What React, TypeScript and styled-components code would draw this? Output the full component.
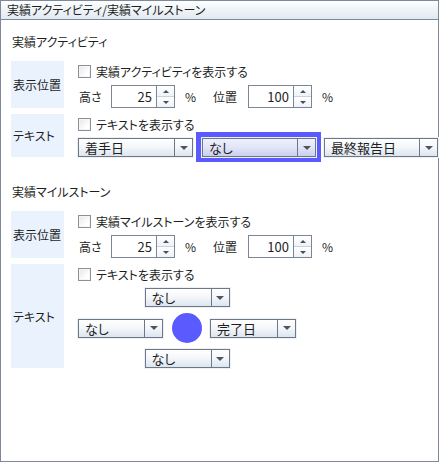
import React from 'react';
import styled, { createGlobalStyle, css } from 'styled-components';

const GlobalStyle = createGlobalStyle`
  html, body {
    margin: 0;
    padding: 0;
    background: #ffffff;
  }
  body {
    font-family: "Noto Sans CJK JP", "Noto Sans", sans-serif;
    font-size: 12px;
    color: #1e1e1e;
    font-feature-settings: "palt";
  }
`;

const borderColor = '#7e8898';
const comboBorder = '#6d7787';
const accent = '#5a5aff';

const Window = styled.div`
  box-sizing: border-box;
  width: 439px;
  height: 462px;
  border: 1px solid ${borderColor};
  display: flex;
  flex-direction: column;
  background: #ffffff;
`;

const TitleBar = styled.div`
  height: 18px;
  line-height: 18px;
  padding-left: 6px;
  border-bottom: 1px solid ${borderColor};
  background: linear-gradient(#fdfeff, #e1e9f1);
  white-space: nowrap;
`;

const Content = styled.div`
  padding: 12px 0 0 10px;
  display: flex;
  flex-direction: column;
`;

const Heading = styled.div<{ $gapTop?: number }>`
  height: 19px;
  line-height: 19px;
  padding-left: 1px;
  margin-top: ${({ $gapTop }) => $gapTop ?? 0}px;
  margin-bottom: 10px;
`;

const Row = styled.div`
  display: flex;
  gap: 14px;
  margin-bottom: 6px;
`;

const LabelCell = styled.div`
  box-sizing: border-box;
  width: 53px;
  flex: none;
  padding-left: 2px;
  display: flex;
  align-items: center;
  background: #eaf2fd;
`;

const Controls = styled.div`
  display: flex;
  flex-direction: column;
  gap: 4px;
`;

const CheckRow = styled.label`
  height: 20px;
  display: flex;
  align-items: center;
  gap: 5px;
  white-space: nowrap;
`;

const CheckBox = styled.span`
  box-sizing: border-box;
  width: 13px;
  height: 13px;
  border: 1px solid #8e9094;
  background: linear-gradient(135deg, #e4e6ea, #ffffff 70%);
  box-shadow: inset 0 0 0 1px #f4f5f7;
`;

const SpinRow = styled.div`
  height: 23px;
  display: flex;
  align-items: center;
  white-space: nowrap;
`;

const Caption = styled.span<{ $width: number; $indent?: number }>`
  width: ${({ $width }) => $width}px;
  margin-left: ${({ $indent }) => $indent ?? 0}px;
  flex: none;
`;

const Spinner = styled.div`
  box-sizing: border-box;
  width: 64px;
  height: 23px;
  border: 1px solid #7b8595;
  display: flex;
  flex: none;
  background: #ffffff;
`;

const SpinValue = styled.div`
  flex: 1;
  text-align: right;
  padding-right: 4px;
  line-height: 22px;
  font-size: 13px;
`;

const SpinButtons = styled.div`
  width: 17px;
  border-left: 1px solid #7b8595;
  display: flex;
  flex-direction: column;
`;

const SpinHalf = styled.div<{ $up?: boolean }>`
  flex: 1;
  display: flex;
  align-items: center;
  justify-content: center;
  background: linear-gradient(#ffffff, #eef3f8);
  ${({ $up }) =>
    $up &&
    css`
      border-bottom: 1px solid #c9d2dc;
    `}

  &::after {
    content: '';
    border-left: 3px solid transparent;
    border-right: 3px solid transparent;
    ${({ $up }) =>
      $up
        ? 'border-bottom: 3px solid #4a4f57;'
        : 'border-top: 3px solid #4a4f57;'}
  }
`;

const ComboRow = styled.div`
  height: 19px;
  display: flex;
  align-items: center;
  gap: 3px;
`;

const Combo = styled.div<{ $width: number; $active?: boolean }>`
  box-sizing: border-box;
  width: ${({ $width }) => $width}px;
  height: 19px;
  flex: none;
  display: flex;
  border: 1px solid ${comboBorder};
  box-shadow: 0 0 0 1px #edf1f6;
  background: ${({ $active }) =>
    $active
      ? 'linear-gradient(#eef0fb, #e2e5f7 50%, #c9d0ef)'
      : 'linear-gradient(#ffffff, #f3f6fa 50%, #dce5ee)'};
`;

const ComboText = styled.div`
  flex: 1;
  padding-left: 6px;
  line-height: 17px;
  font-size: 13px;
  white-space: nowrap;
  overflow: hidden;
`;

const ComboButton = styled.div`
  width: 17px;
  border-left: 1px solid ${comboBorder};
  display: flex;
  align-items: center;
  justify-content: center;

  &::after {
    content: '';
    border-left: 4px solid transparent;
    border-right: 4px solid transparent;
    border-top: 4px solid #50555c;
  }
`;

const Highlight = styled.div`
  padding: 6px 5px 5px 6px;
  margin: -6px 0 -5px 0;
  background: ${accent};
`;

const Cross = styled.div`
  width: 218px;
  display: flex;
  flex-direction: column;
  align-items: center;
  gap: 6px;
`;

const CrossMiddle = styled.div`
  display: flex;
  align-items: center;
`;

const Dot = styled.div`
  width: 30px;
  height: 30px;
  margin: 0 8px 0 9px;
  border-radius: 50%;
  background: ${accent};
`;

function Check({ label }: { label: string }) {
  return (
    <CheckRow>
      <CheckBox />
      {label}
    </CheckRow>
  );
}

function Select({ value, width, active }: { value: string; width: number; active?: boolean }) {
  return (
    <Combo $width={width} $active={active}>
      <ComboText>{value}</ComboText>
      <ComboButton />
    </Combo>
  );
}

function NumberBox({ value }: { value: number }) {
  return (
    <Spinner>
      <SpinValue>{value}</SpinValue>
      <SpinButtons>
        <SpinHalf $up />
        <SpinHalf />
      </SpinButtons>
    </Spinner>
  );
}

function PositionRow({ checkLabel }: { checkLabel: string }) {
  return (
    <Row>
      <LabelCell>表示位置</LabelCell>
      <Controls>
        <Check label={checkLabel} />
        <SpinRow>
          <Caption $width={32} $indent={1}>高さ</Caption>
          <NumberBox value={25} />
          <Caption $width={28} $indent={10}>%</Caption>
          <Caption $width={35}>位置</Caption>
          <NumberBox value={100} />
          <Caption $width={20} $indent={10}>%</Caption>
        </SpinRow>
      </Controls>
    </Row>
  );
}

export default function App() {
  return (
    <>
      <GlobalStyle />
      <Window>
        <TitleBar>実績アクティビティ/実績マイルストーン</TitleBar>
        <Content>
          <Heading>実績アクティビティ</Heading>
          <PositionRow checkLabel="実績アクティビティを表示する" />
          <Row>
            <LabelCell>テキスト</LabelCell>
            <Controls>
              <Check label="テキストを表示する" />
              <ComboRow>
                <Select value="着手日" width={115} />
                <Highlight>
                  <Select value="なし" width={114} active />
                </Highlight>
                <Select value="最終報告日" width={114} />
              </ComboRow>
            </Controls>
          </Row>

          <Heading $gapTop={19}>実績マイルストーン</Heading>
          <PositionRow checkLabel="実績マイルストーンを表示する" />
          <Row>
            <LabelCell>テキスト</LabelCell>
            <Controls>
              <Check label="テキストを表示する" />
              <Cross>
                <Select value="なし" width={85} />
                <CrossMiddle>
                  <Select value="なし" width={85} />
                  <Dot />
                  <Select value="完了日" width={86} />
                </CrossMiddle>
                <Select value="なし" width={85} />
              </Cross>
            </Controls>
          </Row>
        </Content>
      </Window>
    </>
  );
}
